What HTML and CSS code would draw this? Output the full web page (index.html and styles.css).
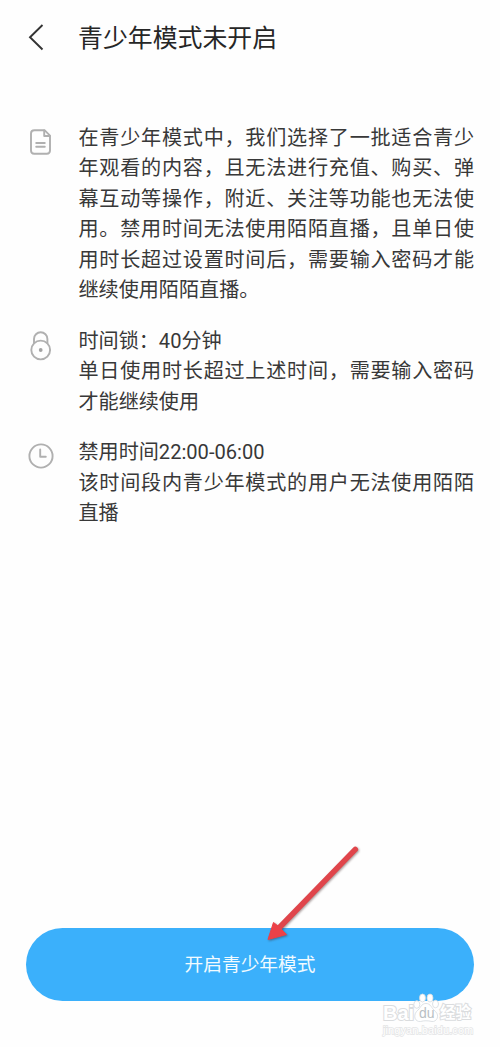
FILE: index.html
```
<!DOCTYPE html>
<html lang="zh-CN">
<head>
  <meta charset="UTF-8">
  <meta name="viewport" content="width=device-width, initial-scale=1">
  <title>青少年模式</title>
  <link rel="stylesheet" href="styles.css">
</head>
<body>
  <header class="header">
    <svg class="back" viewBox="0 0 16 28" width="16" height="28">
      <path d="M14.5 2 2 14.2 14.5 26.5"/>
    </svg>
    <h1>青少年模式未开启</h1>
  </header>

  <main class="list">
    <section class="item">
      <svg class="icon icon-doc" viewBox="0 0 24 28" width="24" height="28">
        <path d="M5.5 2.2H15.5L21 7.7V22.5Q21 25.7 17.8 25.7H5.2Q2 25.7 2 22.5V5.4Q2 2.2 5.5 2.2Z"/>
        <path d="M15.2 2.5V8H20.8M7.2 15H15.8M7.2 18.8H15.8"/>
      </svg>
      <p>在青少年模式中，我们选择了一批适合青少年观看的内容，且无法进行充值、购买、弹幕互动等操作，附近、关注等功能也无法使用。禁用时间无法使用陌陌直播，且单日使用时长超过设置时间后，需要输入密码才能继续使用陌陌直播。</p>
    </section>

    <section class="item">
      <svg class="icon icon-lock" viewBox="0 0 24 32" width="24" height="32">
        <path d="M5 13V9A6.7 6.7 0 0 1 18.4 9V13"/>
        <circle cx="11.7" cy="20" r="9.4"/>
        <circle class="dot" cx="11.7" cy="20" r="1.9"/>
      </svg>
      <div>
        <p>时间锁：40分钟</p>
        <p>单日使用时长超过上述时间，需要输入密码才能继续使用</p>
      </div>
    </section>

    <section class="item">
      <svg class="icon icon-clock" viewBox="0 0 28 28" width="28" height="28">
        <circle cx="14" cy="14" r="11.6"/>
        <path d="M13.2 7.5V14.8H18.8"/>
      </svg>
      <div>
        <p>禁用时间22:00-06:00</p>
        <p>该时间段内青少年模式的用户无法使用陌陌直播</p>
      </div>
    </section>
  </main>

  <footer class="footer">
    <button class="open-btn" type="button">开启青少年模式</button>

    <svg class="arrow" viewBox="0 0 100 105" width="100" height="105">
      <path class="shaft" d="M89.3 11.4 12 91"/>
      <path class="head" d="M2 101.5 7.5 84.5 12 88 17 93 20.5 96.5Z"/>
    </svg>

    <div class="watermark">
      <div class="brand">
        <span class="bai">Bai</span>
        <span class="paw">
          <svg viewBox="0 0 26 30" width="26" height="30">
            <ellipse cx="3.8" cy="11.5" rx="3" ry="3.8"/>
            <ellipse cx="9.5" cy="5" rx="3" ry="4"/>
            <ellipse cx="17" cy="5" rx="3" ry="4"/>
            <ellipse cx="22.5" cy="11" rx="3" ry="3.8"/>
            <path d="M13 10.5C18 10.5 18 15 22.5 18.5C27 23 23.5 29 19 28.5C15 27.5 11 27.5 7.5 28.5C2 29 0 23 3.5 18.5C8 15 8 10.5 13 10.5Z"/>
          </svg>
          <span class="du">du</span>
        </span>
        <span class="cn">经验</span>
      </div>
      <div class="site">jingyan.baidu.com</div>
    </div>
  </footer>
</body>
</html>
```
FILE: styles.css
```
* { box-sizing:border-box; margin:0; padding:0 }
body {
  width:500px; height:1047px; overflow:hidden;
  display:flex; flex-direction:column;
  background:#fefefe; color:#383838;
  font-family:Roboto, "Noto Sans CJK SC", sans-serif;
}
svg { fill:none; flex:none }

.header {
  display:flex; align-items:center; gap:34px;
  height:77px; padding-left:28px;
}
.back { stroke:#333; stroke-width:1.9; margin-top:-4px }
.header h1 { font-size:24.9px; font-weight:400; line-height:36px; color:#262626; padding-top:1px }

.list {
  display:flex; flex-direction:column; gap:20px;
  padding:45.5px 26px 0 27px;
}
.item { display:grid; grid-template-columns:51.5px 395.5px }
.item p { font-size:20.1px; line-height:30.5px; text-align:justify }
.icon { stroke:#b0b0b0; stroke-width:1.9; stroke-linecap:round; stroke-linejoin:round }
.icon-doc { margin:5px 0 0 2px }
.icon-lock { margin:4px 0 0 2px }
.icon-clock { margin:5px 0 0 }
.icon .dot { fill:#a2a2a2; stroke:none }

.footer { position:relative; margin-top:auto; padding:0 26px 46px }
.open-btn {
  display:block; width:448px; height:73px; padding-bottom:4px;
  border:none; border-radius:37px;
  background:#3bb0fb; color:#f2fbff;
  font-family:inherit; font-size:18.7px;
}

/* pointer over the button */
.arrow { position:absolute; left:266px; top:-90px; overflow:visible; filter:drop-shadow(1px 1px 1px rgba(60,30,30,.45)) }
.arrow .shaft { stroke:#e0454b; stroke-width:5.5; stroke-linecap:round }
.arrow .head { fill:#ec4148; stroke:#ec4148; stroke-width:1; stroke-linejoin:round }

.watermark {
  position:absolute; left:383px; top:65px; width:92px;
  color:#fff;
  font-family:"Liberation Sans", "Noto Sans CJK SC", sans-serif;
}
.brand { display:flex; align-items:flex-end; height:30px; font-size:20px; font-weight:bold; line-height:20px }
.brand .bai, .brand .cn { -webkit-text-stroke:2px #dadcde; paint-order:stroke fill }
.brand .bai { width:30px }
.paw { position:relative; width:26px; height:30px }
.paw svg { display:block; fill:#fff; stroke:#d5dade; stroke-width:.8; overflow:visible }
.paw .du { position:absolute; left:6px; top:10px; font-size:14px; font-weight:400; line-height:20px; color:#b9bfc4 }
.brand .cn { font-size:15.5px; margin-left:1px; white-space:nowrap }
.site { font-size:11px; line-height:15px; letter-spacing:.1px; color:#fff; -webkit-text-stroke:1.4px #e3e4e5; paint-order:stroke fill }
```
